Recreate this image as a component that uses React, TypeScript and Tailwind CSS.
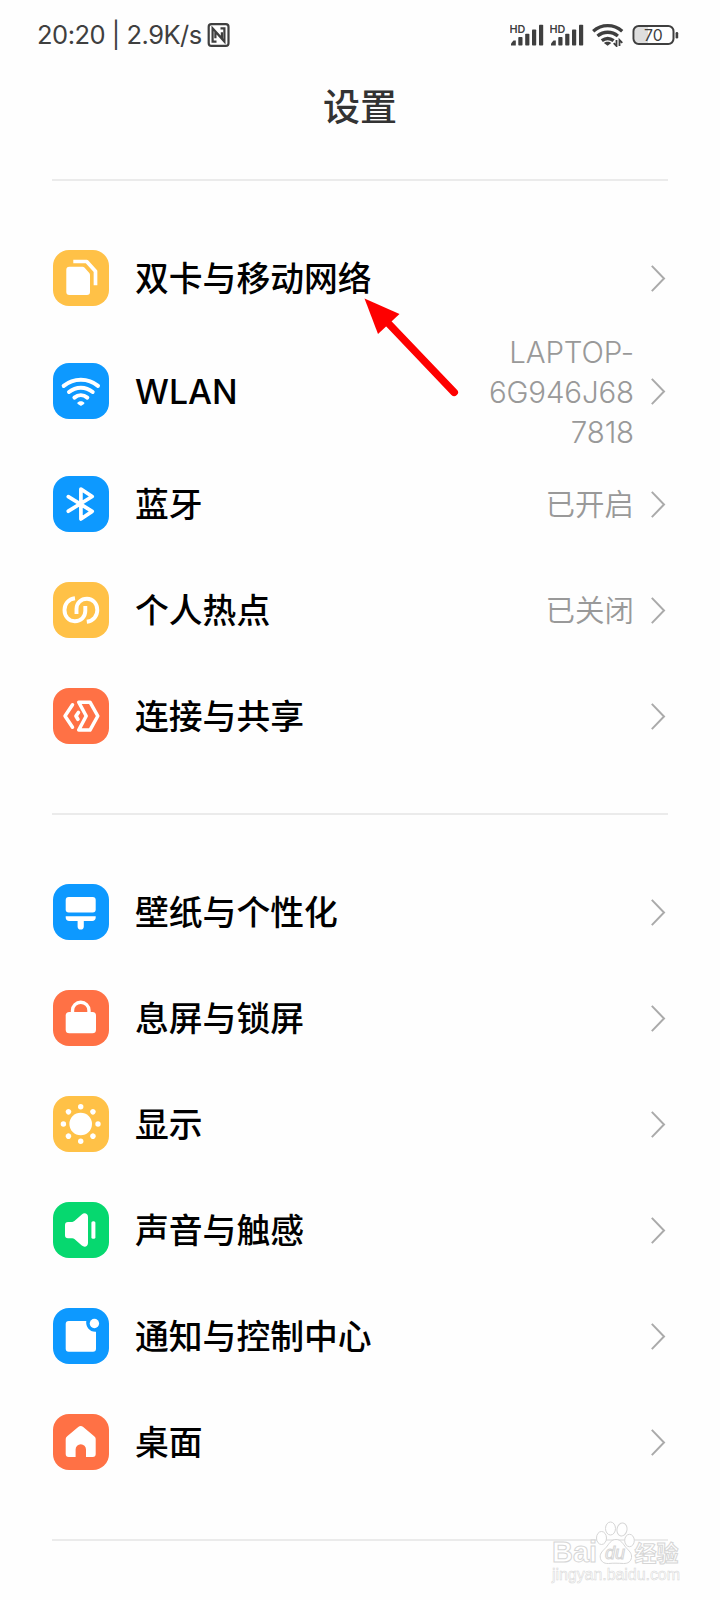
import type { ReactNode } from 'react';
import clsx from 'clsx';

interface SettingItem {
  label: string;
  tile: string;
  icon: ReactNode;
  value?: string[];
}

const BLUE = 'bg-[#0d99ff]';
const YELLOW = 'bg-[#ffc147]';
const ORANGE = 'bg-[#ff7145]';
const GREEN = 'bg-[#06d86f]';

const stroke = {
  fill: 'none',
  stroke: 'currentColor',
  strokeWidth: 3.7,
  strokeLinecap: 'round',
  strokeLinejoin: 'round',
} as const;

const SUN_DOTS = [0, 45, 90, 135, 180, 225, 270, 315];

const NETWORK_ITEMS: SettingItem[] = [
  {
    label: '双卡与移动网络',
    tile: YELLOW,
    icon: (
      <>
        <path d="M16.3 16.7h13.2c.8 0 1.4.3 1.9.9l4.7 5.2c.6.6.9 1.3.9 2.1V42a3 3 0 0 1-3 3H16.3a3 3 0 0 1-3-3V19.7a3 3 0 0 1 3-3z" />
        <path {...stroke} strokeLinecap="butt" d="M20.3 11.5h13.4l8.8 9.7V35.2" />
      </>
    ),
  },
  {
    label: 'WLAN',
    tile: BLUE,
    value: ['LAPTOP-', '6G946J68', '7818'],
    icon: (
      <>
        <path {...stroke} strokeWidth={4} d="M10.7 22.9C20.5 14.7 35.3 14.7 45 22.9" />
        <path {...stroke} strokeWidth={4} d="M16 29C23 23.3 32.7 23.3 39.7 29" />
        <path {...stroke} strokeWidth={4} d="M21.4 34.6c3.8-3.1 9-3.1 12.9 0" />
        <path d="M24.6 39.5c1.8-1.8 4.7-1.8 6.5 0 .5.5.4 1-.1 1.4l-2.3 1.6c-.5.4-1.1.4-1.6 0l-2.3-1.6c-.6-.4-.7-.9-.2-1.4z" />
      </>
    ),
  },
  {
    label: '蓝牙',
    tile: BLUE,
    value: ['已开启'],
    icon: <path {...stroke} d="M15.3 20.7 39.2 35.4 27.9 43V13L39.2 20.5 15.3 35.2" />,
  },
  {
    label: '个人热点',
    tile: YELLOW,
    value: ['已关闭'],
    icon: (
      <>
        <path {...stroke} strokeLinecap="butt" strokeWidth={3.9} d="M22 16.3C15.2 17.2 11.5 22.3 11.5 28c0 6.4 4.3 11.2 10.3 11.2S32.3 34.8 32.3 29v-5" />
        <path {...stroke} strokeLinecap="butt" strokeWidth={3.9} d="M33.8 39.7C40.6 38.8 44.3 33.7 44.3 28c0-6.4-4.3-11.2-10.3-11.2S23.5 21.2 23.5 27v5" />
      </>
    ),
  },
  {
    label: '连接与共享',
    tile: ORANGE,
    icon: (
      <>
        <path {...stroke} strokeWidth={3.5} d="M19.5 16.8 12 28l7.5 11.2" />
        <path {...stroke} d="M25.4 24.5 23 28l1.9 3.2" />
        <path {...stroke} strokeWidth={3.5} d="M25.7 14.2H37L44.8 28 37 42.1H25.7L33.2 28z" />
      </>
    ),
  },
];

const PERSONAL_ITEMS: SettingItem[] = [
  {
    label: '壁纸与个性化',
    tile: BLUE,
    icon: (
      <>
        <rect x="12.7" y="13" width="30" height="15.6" rx="3" />
        <path d="M12.7 32.2h30v1.3c0 2.2-1.4 3.6-3.5 3.6h-8.4v5.4a3.1 3.1 0 0 1-6.2 0v-5.4h-8.4c-2.1 0-3.5-1.4-3.5-3.6z" />
      </>
    ),
  },
  {
    label: '息屏与锁屏',
    tile: ORANGE,
    icon: (
      <>
        <path {...stroke} strokeWidth={3.4} d="M19.5 23.5v-3a8.2 8.2 0 0 1 16.5 0v3" />
        <rect x="12.7" y="21.9" width="30.3" height="21.4" rx="3.6" />
      </>
    ),
  },
  {
    label: '显示',
    tile: YELLOW,
    icon: (
      <>
        <circle cx="27.7" cy="28" r="11.3" />
        {SUN_DOTS.map((deg) => (
          <circle key={deg} cx="27.7" cy="10.7" r="2.7" transform={`rotate(${deg} 27.7 28)`} />
        ))}
      </>
    ),
  },
  {
    label: '声音与触感',
    tile: GREEN,
    icon: (
      <>
        <path d="M15 19.9h4.3c.8 0 1.5-.3 2.1-.8l7.4-6.6c2.4-2.2 6.2-1.2 6.2 2.5v26c0 3.7-3.8 4.7-6.2 2.5L21.4 37c-.6-.5-1.3-.8-2.1-.8H15a3 3 0 0 1-3-3V22.9a3 3 0 0 1 3-3z" />
        <rect x="38.4" y="19.2" width="4" height="17.6" rx="1.6" />
      </>
    ),
  },
  {
    label: '通知与控制中心',
    tile: BLUE,
    icon: (
      <>
        <path d="M15.7 13h17.6c-1 5.7 3.6 11.3 9.7 10.8v16.9a3 3 0 0 1-3 3H15.7a3 3 0 0 1-3-3V16a3 3 0 0 1 3-3z" />
        <circle cx="41.4" cy="15.5" r="4.7" />
      </>
    ),
  },
  {
    label: '桌面',
    tile: ORANGE,
    icon: (
      <path d="M25.2 12.9c1.5-1.3 3.5-1.3 5 0l11 9.3c1 .8 1.5 1.8 1.5 3.1v14.6a3 3 0 0 1-3 3H33v-7.4a5.2 5.2 0 0 0-10.4 0v7.4h-6.9a3 3 0 0 1-3-3V25.3c0-1.3.5-2.3 1.5-3.1z" />
    ),
  },
];

function SignalBars() {
  return (
    <svg width="34" height="24" viewBox="0 0 34 24" fill="#3f3f3f">
      <text x="-0.5" y="9.6" fontSize="10.8" fontWeight="600" fontFamily="Inter, sans-serif" textLength="15.8" lengthAdjust="spacingAndGlyphs">HD</text>
      <path d="M1 22.5v-2l2.5-3h2.3v5z" />
      <rect x="8.3" y="14" width="4.2" height="8.5" rx="0.8" />
      <rect x="15.2" y="10.8" width="4.2" height="11.7" rx="0.8" />
      <rect x="22" y="6.5" width="4.2" height="16" rx="0.8" />
      <rect x="29" y="1.8" width="4.2" height="20.7" rx="0.8" />
    </svg>
  );
}

function StatusBar() {
  return (
    <div className="flex h-[70px] items-center justify-between pr-[41px] pl-[37px] text-[#3f3f3f]">
      <div className="flex items-center">
        <span className="w-[170px] text-[25.5px] tracking-[-0.5px] whitespace-pre">20:20 | 2.9K/s</span>
        <svg width="23" height="24" viewBox="0 0 23 24" fill="none" stroke="#3f3f3f" strokeWidth="2.2">
          <rect x="1.7" y="1.2" width="19.8" height="21.6" rx="2.6" />
          <path d="M9.5 18.6H5.6V5.3l9.3 10.2V9.3M13.5 5.3h3.9v13.4L8.4 8.5v6.8" />
        </svg>
      </div>
      <div className="flex items-center">
        <SignalBars />
        <div className="ml-1.5 flex">
          <SignalBars />
        </div>
        <svg className="ml-2" width="32" height="24" viewBox="0 0 32 24" fill="none" stroke="#3f3f3f" strokeWidth="3.4">
          <path d="M1.2 8.2c8.5-7.4 20.5-7.4 29 0" />
          <path d="M5.5 13c6.2-5 14.2-5 20.4 0" />
          <path d="M9.8 17.7c3.8-2.9 8-2.9 11.8 0" />
          <path d="m15.6 22.8-3.7-2.7c2-1.7 5.4-1.7 7.4 0z" fill="#3f3f3f" stroke="none" />
          <path d="M24.5 17v6l-2.8-2.8M27.5 23v-6l2.8 2.8" strokeWidth="1.8" />
        </svg>
        <svg className="ml-2" width="47" height="24" viewBox="0 0 47 24">
          <path d="M5 4h11v16H5a2 2 0 0 1-2-2V6a2 2 0 0 1 2-2z" fill="#dedede" />
          <rect x="1.5" y="3" width="40" height="18" rx="5.2" fill="none" stroke="#3f3f3f" strokeWidth="2" />
          <rect x="43.6" y="9" width="2.6" height="6.4" rx="1.2" fill="#3f3f3f" />
          <text x="21.3" y="17.7" fontSize="15.8" textAnchor="middle" fill="#3f3f3f" fontFamily="Inter, sans-serif">70</text>
        </svg>
      </div>
    </div>
  );
}

function SettingRow({ label, tile, icon, value }: SettingItem) {
  return (
    <li className={clsx('flex items-center', value && value.length > 1 ? 'h-[120px]' : 'h-[106px]')}>
      <div className={clsx('ml-px size-14 shrink-0 rounded-[16px] text-white', tile)}>
        <svg width="56" height="56" viewBox="0 0 56 56" fill="currentColor">{icon}</svg>
      </div>
      <span className="ml-[26px] pt-0.5 text-[33.8px] leading-none font-medium text-black">{label}</span>
      <div className="ml-auto flex items-center">
        {value && (
          <div
            className={clsx(
              'text-right text-[29.5px] leading-10 font-[350] text-[#999]',
              value.length > 1 && 'pt-px tracking-[-0.15px]',
            )}
          >
            {value.map((line) => (
              <div key={line}>{line}</div>
            ))}
          </div>
        )}
        <svg className="mr-0.5 ml-4" width="16" height="28" viewBox="0 0 16 28" fill="none" stroke="#aaa" strokeWidth="2">
          <path d="M1.8 1.9 14 14.5 1.8 27.100" />
        </svg>
      </div>
    </li>
  );
}

function SettingGroup({ items }: { items: SettingItem[] }) {
  return (
    <ul className="mx-[52px] border-t-2 border-[#ebebeb] py-11">
      {items.map((item) => (
        <SettingRow key={item.label} {...item} />
      ))}
    </ul>
  );
}

function PointerArrow() {
  return (
    <svg className="absolute top-[290px] left-[355px]" width="110" height="110" viewBox="0 0 110 110" fill="#fe0000">
      <path d="M9.5 8.5 44.5 24 23 44z" />
      <path d="M34 34 99.2 102.3" stroke="#fe0000" strokeWidth="7.6" strokeLinecap="round" />
    </svg>
  );
}

function Watermark() {
  return (
    <svg
      className="absolute top-[1515px] left-[545px]"
      width="145"
      height="75"
      viewBox="0 0 145 75"
      fill="#fff"
      stroke="#d6d6d6"
      strokeWidth="1"
      fontFamily='"Liberation Sans", "Noto Sans CJK SC", sans-serif'
    >
      <text x="7" y="47" fontSize="29" fontWeight="700" textLength="45" lengthAdjust="spacingAndGlyphs">Bai</text>
      <ellipse cx="56.5" cy="23" rx="5" ry="6.5" />
      <ellipse cx="65.5" cy="13.5" rx="5" ry="6.5" />
      <ellipse cx="77" cy="14.5" rx="5" ry="6.5" transform="rotate(10 77 14.5)" />
      <ellipse cx="84.5" cy="25.5" rx="4.8" ry="6.2" />
      <path d="M71 24.5c5 0 7 4.500 10 8s6 5.500 5.500 10c-.5 4-3.500 6.200-8 6-5-.3-10-.5-15 0-5 .4-8-2.500-8.300-6.500-.3-4 3-6.500 5.800-9.500 3-3.500 5-8 10-8z" />
      <text x="60" y="44" fontSize="18" fontStyle="italic" textLength="20">du</text>
      <text x="89.5" y="45.5" fontSize="22" fontWeight="700" textLength="44">经验</text>
      <text x="7" y="65" fontSize="16" strokeWidth="0.5" textLength="128">jingyan.baidu.com</text>
    </svg>
  );
}

export default function App() {
  return (
    <div className="relative h-[1600px] w-[720px] overflow-hidden bg-[#fefefe] font-[Inter,'Noto_Sans_CJK_SC',sans-serif]">
      <StatusBar />
      <h1 className="h-[109px] pt-[19px] text-center text-[37px] leading-[38px] font-medium text-[#333]">设置</h1>
      <SettingGroup items={NETWORK_ITEMS} />
      <SettingGroup items={PERSONAL_ITEMS} />
      <hr className="mx-[52px] border-t-2 border-[#ebebeb]" />
      <PointerArrow />
      <Watermark />
    </div>
  );
}
